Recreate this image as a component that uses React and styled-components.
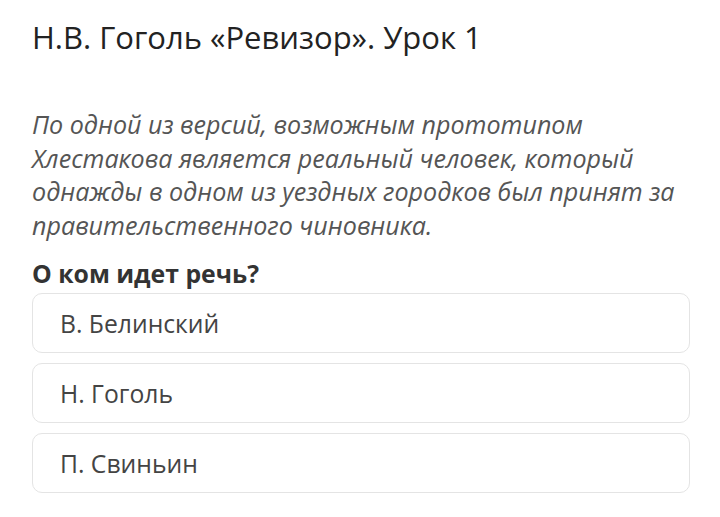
import React from 'react';
import styled, { createGlobalStyle } from 'styled-components';

const GlobalStyle = createGlobalStyle`
  html, body {
    margin: 0;
    padding: 0;
    background: #ffffff;
  }
  body {
    font-family: 'Open Sans', 'Noto Sans', sans-serif;
  }
`;

const Page = styled.div`
  width: 720px;
  height: 517px;
  box-sizing: border-box;
  padding: 17px 30px 0 32px;
  display: flex;
  flex-direction: column;
  overflow: hidden;
`;

const Title = styled.h1`
  margin: 0;
  font-size: 31px;
  font-weight: 400;
  line-height: 40px;
  color: #222222;
`;

const Prompt = styled.p`
  margin: 51px 0 0;
  font-size: 25.1px;
  font-style: italic;
  line-height: 33.5px;
  color: #555555;
`;

const Question = styled.div`
  margin-top: 16px;
  font-size: 24.8px;
  font-weight: 700;
  line-height: 30px;
  color: #333333;
`;

const Options = styled.div`
  margin-top: 5px;
  display: flex;
  flex-direction: column;
  gap: 10px;
`;

const Option = styled.div`
  height: 60px;
  box-sizing: border-box;
  padding: 0 27px;
  display: flex;
  align-items: center;
  border: 1px solid #e4e4e4;
  border-radius: 10px;
  font-size: 24.7px;
  color: #444444;
`;

const answers = ['В. Белинский', 'Н. Гоголь', 'П. Свиньин'];

const App = () => (
  <>
    <GlobalStyle />
    <Page>
      <Title>Н.В. Гоголь «Ревизор». Урок 1</Title>
      <Prompt>
        По одной из версий, возможным прототипом Хлестакова является реальный
        человек, который однажды в одном из уездных городков был принят за
        правительственного чиновника.
      </Prompt>
      <Question>О ком идет речь?</Question>
      <Options>
        {answers.map(a => <Option key={a}>{a}</Option>)}
      </Options>
    </Page>
  </>
);

export default App;
